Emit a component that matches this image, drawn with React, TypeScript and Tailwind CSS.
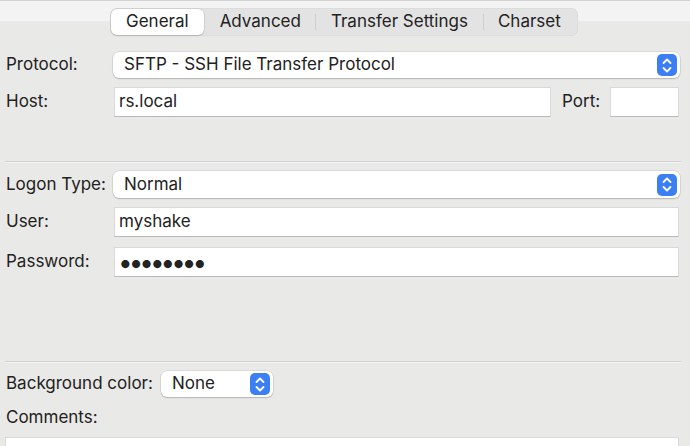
import React from "react";

const font = { fontFamily: "Inter, 'Noto Sans', 'Liberation Sans', sans-serif" };

function Stepper({ className }: { className: string }) {
  return (
    <div className={"flex items-center justify-center rounded-[5px] bg-[#3b7ff3] " + className}>
      <svg width="10" height="15" viewBox="0 0 10 15" fill="none" stroke="white" strokeWidth="1.8" strokeLinecap="round" strokeLinejoin="round">
        <path d="M1.5 5 L5 1.5 L8.5 5" />
        <path d="M1.5 10 L5 13.5 L8.5 10" />
      </svg>
    </div>
  );
}

function Select({ value, className }: { value: string; className: string }) {
  return (
    <div className={"flex items-center justify-between rounded-[6px] bg-white shadow-[0_0_0_0.5px_rgba(0,0,0,0.12),0_1px_1.5px_rgba(0,0,0,0.18)] pl-[11px] pr-[3px] " + className}>
      <span>{value}</span>
      <Stepper className="w-[20px] h-[22px]" />
    </div>
  );
}

function Input({ value, className, big }: { value?: string; className: string; big?: boolean }) {
  return (
    <div className={"flex items-center bg-white border border-[#d9d9d9] border-b-[#b9b9b9] pl-[4px] " + className}>
      {big ? (
        <span className="text-[26px] tracking-[-4px] leading-none ml-[-1px] mt-[1px]">{value}</span>
      ) : (
        <span>{value}</span>
      )}
    </div>
  );
}

function Separator({ className }: { className: string }) {
  return <div className={"ml-[-1px] mr-[-1px] h-[2px] border-t border-[#d2d2d2] border-b border-b-[#f3f3f3] " + className} />;
}

export default function App() {
  return (
    <div
      style={font}
      className="w-[690px] h-[446px] overflow-hidden text-[17px] text-[#222] bg-[linear-gradient(to_bottom,#d2d2d2_0px,#d2d2d2_1px,#f3f3f3_1px,#f3f3f3_21px,#e9e9e7_21px)]"
    >
      <div className="pt-[8px] pl-[110px] flex">
        <div className="flex items-center h-[28px] rounded-[7px] bg-[#e3e3e3] shadow-[inset_0_0_0_0.5px_rgba(0,0,0,0.06)]">
          <div className="h-[26px] ml-[1px] flex items-center px-[15px] bg-white rounded-[6px] shadow-[0_0_0_0.5px_rgba(0,0,0,0.1),0_1px_1.5px_rgba(0,0,0,0.15)]">
            General
          </div>
          <div className="pl-[16px] pr-[14px] flex items-center">Advanced</div>
          <div className="w-px h-[16px] bg-[#cfcfcf]" />
          <div className="px-[15px] flex items-center">Transfer Settings</div>
          <div className="w-px h-[16px] bg-[#cfcfcf]" />
          <div className="pl-[14px] pr-[17px] flex items-center">Charset</div>
        </div>
      </div>

      <div className="pl-[6px] pr-[10px] pt-[16px] flex flex-col">
        <div className="flex items-center h-[26px]">
          <div className="w-[107px]">Protocol:</div>
          <Select value="SFTP - SSH File Transfer Protocol" className="flex-1 h-[26px]" />
        </div>

        <div className="flex items-center h-[30px] mt-[9px]">
          <div className="w-[108px]">Host:</div>
          <Input value="rs.local" className="w-[437px] h-[30px]" />
          <div className="ml-[11px] w-[48px]">Port:</div>
          <Input className="flex-1 h-[30px] mr-[1px]" />
        </div>

        <Separator className="mt-[44px]" />

        <div className="flex items-center h-[27px] mt-[8px]">
          <div className="w-[107px]">Logon Type:</div>
          <Select value="Normal" className="flex-1 h-[27px]" />
        </div>

        <div className="flex items-center h-[30px] mt-[9px]">
          <div className="w-[108px]">User:</div>
          <Input value="myshake" className="flex-1 h-[30px] mr-[1px]" />
        </div>

        <div className="flex items-center h-[30px] mt-[10px]">
          <div className="w-[108px]">Password:</div>
          <Input value="••••••••" big className="flex-1 h-[30px] mr-[1px]" />
        </div>

        <Separator className="mt-[84px]" />

        <div className="flex items-center h-[26px] mt-[8px]">
          <div className="w-[155px]">Background color:</div>
          <Select value="None" className="w-[112px] h-[26px]" />
        </div>

        <div className="mt-[10px] h-[20px] leading-[20px]">Comments:</div>

        <div className="mt-[10px] ml-[-1px] mr-[1px] h-[40px] bg-white border border-[#d9d9d9]" />
      </div>
    </div>
  );
}
